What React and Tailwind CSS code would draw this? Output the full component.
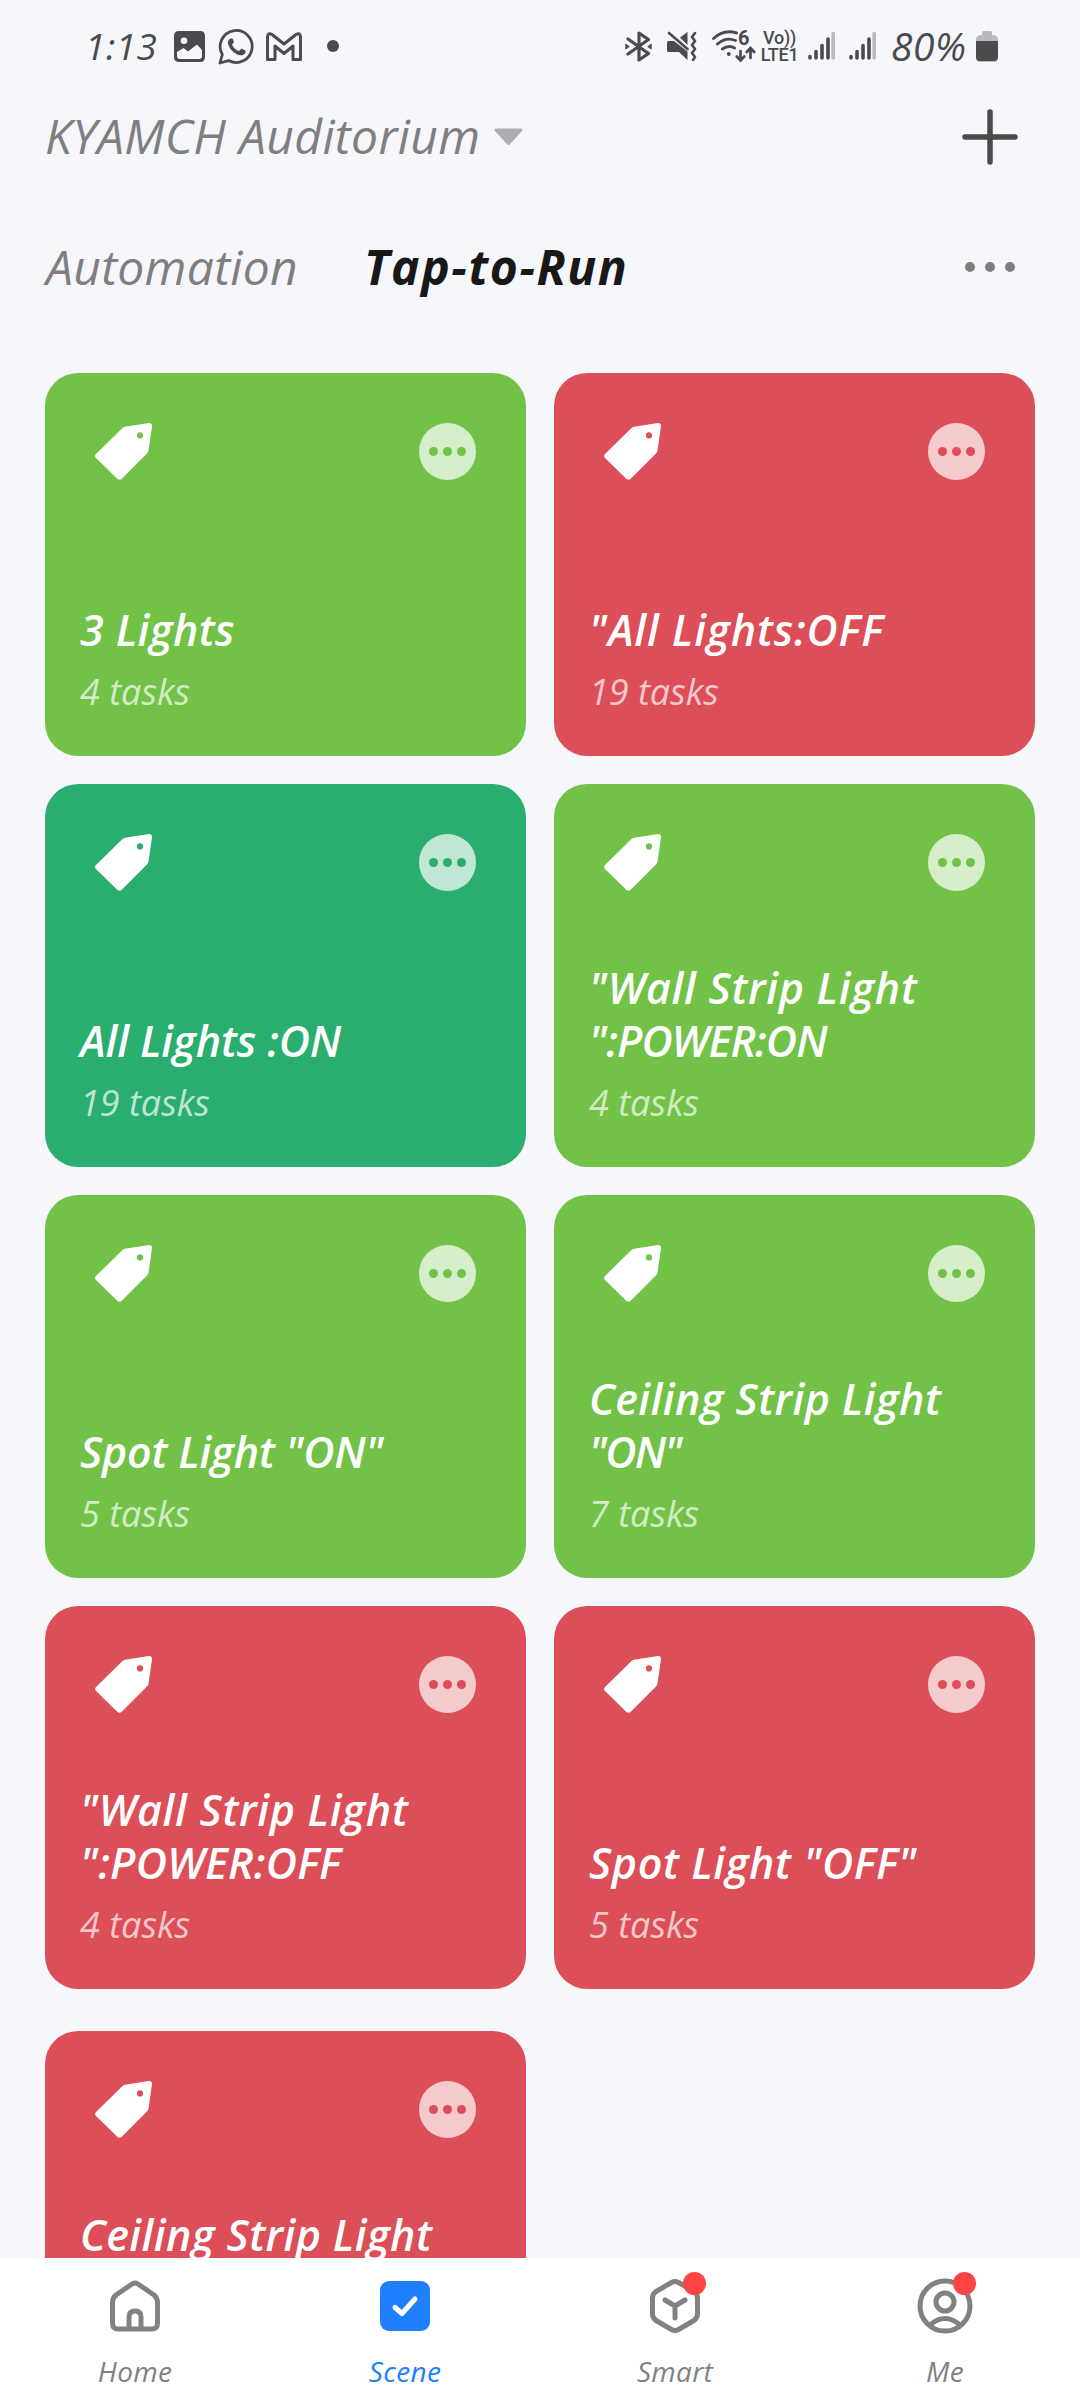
import React from 'react';

const scenes = [
    {
        title: [{ text: '3 Lights', tracking: 'tracking-[0.4px]' }],
        tasks: '4 tasks',
        color: 'lime'
    },
    {
        title: [{ text: '"All Lights:OFF', tracking: 'tracking-[0.9px]' }],
        tasks: '19 tasks',
        color: 'red'
    },
    {
        title: [{ text: 'All Lights :ON', tracking: 'tracking-[-0.1px]' }],
        tasks: '19 tasks',
        color: 'green'
    },
    {
        title: [
            { text: '"Wall Strip Light', tracking: 'tracking-[0.7px]' },
            { text: '":POWER:ON', tracking: 'tracking-[-0.8px]' }
        ],
        tasks: '4 tasks',
        color: 'lime'
    },
    {
        title: [{ text: 'Spot Light "ON"', tracking: 'tracking-[-0.2px]' }],
        tasks: '5 tasks',
        color: 'lime'
    },
    {
        title: [
            { text: 'Ceiling Strip Light', tracking: 'tracking-[0.4px]' },
            { text: '"ON"', tracking: 'tracking-[-1.7px]' }
        ],
        tasks: '7 tasks',
        color: 'lime'
    },
    {
        title: [
            { text: '"Wall Strip Light', tracking: 'tracking-[0.7px]' },
            { text: '":POWER:OFF', tracking: 'tracking-[0.3px]' }
        ],
        tasks: '4 tasks',
        color: 'red'
    },
    {
        title: [{ text: 'Spot Light "OFF"', tracking: 'tracking-[0.6px]' }],
        tasks: '5 tasks',
        color: 'red'
    }
];

// Only the first title line of this one shows above the bottom navigation
const lastScene = {
    title: [
        { text: 'Ceiling Strip Light', tracking: 'tracking-[0.4px]' },
        { text: '', tracking: '' }
    ],
    tasks: '',
    color: 'red'
};

const cardColors = {
    lime: { bg: 'bg-[#72c248]', dots: 'text-[#72c248]' },
    green: { bg: 'bg-[#2aae6f]', dots: 'text-[#2aae6f]' },
    red: { bg: 'bg-[#dc4e58]', dots: 'text-[#dc4e58]' }
};

const SignalBars = () => (
    <svg className="w-[27px] h-[30px]" viewBox="0 0 27 30" stroke="#4a4b4d" strokeWidth="3.6" strokeLinecap="round">
        <path d="M2 25.500V27M8 20.500V27M14 14.500V27M20 8V27" />
        <path d="M25.200 2.500V27" stroke="#b9babd" />
    </svg>
);

const StatusBar = () => (
    <div className="h-[92px] flex items-center justify-between pl-[85px] pr-[82px] text-[#4a4b4d]">
        <div className="flex items-center">
            <span className="w-[89px] text-[37px] tracking-[0.5px]">1:13</span>
            <svg className="w-[31px] h-[31px]" viewBox="0 0 31 31">
                <path fillRule="evenodd" fill="currentColor" d="M5 0H26Q31 0 31 5V26Q31 31 26 31H5Q0 31 0 26V5Q0 0 5 0ZM10 6.500A3.300 3.300 0 1 0 10 13.100A3.300 3.300 0 1 0 10 6.500ZM3 21V25Q3 28 6 28H25Q28 28 28 25V19L23 13.500L14 20.500L9.500 17Z" />
            </svg>
            <svg className="ml-[13px] w-[37px] h-[37px]" viewBox="0 0 37 37">
                <path fill="none" stroke="currentColor" strokeWidth="2.800" strokeLinejoin="round" d="M2 35L4.300 26.500A16 16 0 1 1 10.600 32.600Z" />
                <path fill="currentColor" d="M12.500 10.500Q10 11.500 9.800 14.500Q10.500 20 16 24.500Q21 28.200 24.800 27Q28 25.500 27.600 22.800L23.500 20.600L20.800 23.300Q16 21 14 16.500L16 14.200L14.500 10.500Z" />
            </svg>
            <svg className="ml-[11px] w-[36px] h-[29px]" viewBox="0 0 36 29" fill="none" stroke="currentColor" strokeWidth="3" strokeLinejoin="round">
                <path d="M1.500 5Q2 0 6 2.500L18 12L30 2.500Q34 0 34.500 5V27.500H27V14L18 21.500L9 14V27.500H1.500Z" />
            </svg>
            <span className="ml-[25px] w-[12px] h-[12px] rounded-full bg-current" />
        </div>
        <div className="flex items-center">
            <svg className="w-[27px] h-[31px]" viewBox="0 0 27 31" fill="none" stroke="currentColor" strokeWidth="3.200" strokeLinejoin="round" strokeLinecap="round">
                <path d="M3 8L23.500 22.500L14 29V2L23.500 8.500L3 23" />
                <path fill="currentColor" strokeWidth="1" d="M.8 13.500V18L4 15.800ZM26.200 13.500V18L23 15.800Z" />
            </svg>
            <svg className="ml-[15px] w-[30px] h-[30px]" viewBox="0 0 30 30" fill="currentColor">
                <path d="M1 10H7L20.500 20.500V29L12 21H1Q0 21 0 19V12Q0 10 1 10ZM13 6.500L20.500 1V14Z" />
                <path d="M2 2L20.500 18M28 2L25 6L28 10L25 14L28 18L25 22L28 26L26 29" fill="none" stroke="currentColor" strokeWidth="2.600" strokeLinecap="round" strokeLinejoin="round" />
            </svg>
            <div className="ml-[15px] relative w-[44px] h-[32px]">
                <svg className="w-full h-full" viewBox="0 0 44 32" fill="none" stroke="currentColor" strokeWidth="2.900" strokeLinecap="round">
                    <path d="M1.500 8.500Q12 -1 24.500 3M5.500 14Q14 6.500 23.500 10.500M10.500 19Q16.500 14.500 22.500 18" />
                    <circle cx="16.800" cy="24" r="1.900" fill="currentColor" stroke="none" />
                    <path strokeWidth="2.700" d="M28.500 21V30M24.800 26.500L28.500 30.500L32.200 26.500M38.500 28V19M34.800 22L38.500 18L42.200 22" />
                </svg>
                <span className="absolute left-[26px] -top-[4px] text-[20px] leading-[24px] font-bold not-italic font-[Roboto,sans-serif]">6</span>
            </div>
            <div className="ml-[4px] w-[39px] h-[34px] flex flex-col items-center not-italic font-medium font-[Roboto,sans-serif]">
                <span className="text-[18px] leading-[17px] tracking-[-0.3px] whitespace-nowrap">Vo))</span>
                <span className="text-[18px] leading-[17px] tracking-[-0.3px] whitespace-nowrap">LTE1</span>
            </div>
            <div className="ml-[9px] flex gap-[14px]">
                <SignalBars />
                <SignalBars />
            </div>
            <span className="ml-[15px] w-[85px] text-[39px] tracking-[0.5px]">80%</span>
            <svg className="w-[22px] h-[31px]" viewBox="0 0 22 31">
                <path fill="#b9babd" d="M7 0H15Q16 0 16 4H18Q22 5 22 9V27Q22 31 18 31H4Q0 31 0 27V9Q0 5 4 4H6Q6 0 7 0Z" />
                <path fill="currentColor" d="M0 10H22V26Q22 30 18 30H4Q0 30 0 26Z" />
            </svg>
        </div>
    </div>
);

const SceneCard = ({ scene }) => (
    <div className={`h-[383px] rounded-[33px] pl-[35px] pr-[50px] pt-[50px] pb-[42px] flex flex-col justify-between text-white ${cardColors[scene.color].bg}`}>
        <div className="flex items-center justify-between pl-[15px]">
            <svg className="w-[57px] h-[57px]" viewBox="0 0 57 57">
                <path
                    fill="currentColor"
                    fillRule="evenodd"
                    d="M30 3.800L54 0Q57.300 0 57 3.300L53.500 27.500Q53.400 29 52.200 30.200L26.500 56Q24.500 57.500 22.500 56L1 35Q-.8 33 1 31L27.500 4.900Q28.500 4 30 3.800ZM45 9.300A3.100 3.100 0 1 0 45 15.500A3.100 3.100 0 1 0 45 9.300Z"
                />
            </svg>
            <div className={`w-[57px] h-[57px] rounded-full bg-white/70 flex items-center justify-center gap-[5.600px] ${cardColors[scene.color].dots}`}>
                <span className="w-[8.500px] h-[8.500px] rounded-full bg-current" />
                <span className="w-[8.500px] h-[8.500px] rounded-full bg-current" />
                <span className="w-[8.500px] h-[8.500px] rounded-full bg-current" />
            </div>
        </div>
        <div>
            <h3 className="text-[43px] leading-[53px] font-semibold whitespace-nowrap">
                {scene.title.map((line, index) => (
                    <span key={index} className={`block h-[53px] ${line.tracking}`}>{line.text}</span>
                ))}
            </h3>
            <p className="mt-[14px] h-[44px] text-[36px] leading-[44px] text-white/70">{scene.tasks}</p>
        </div>
    </div>
);

const NavItem = ({ label, active, badge, children }) => (
    <div className={`w-[270px] pt-[20px] flex flex-col items-center ${active ? 'text-[#1f7fff]' : 'text-[#818181]'}`}>
        <div className="relative w-[58px] h-[58px]">
            <svg className="w-full h-full" viewBox="0 0 58 58" fill="none" stroke="currentColor" strokeWidth="5" strokeLinecap="round" strokeLinejoin="round">
                {children}
            </svg>
            {badge && <span className="absolute left-[37px] -top-[6px] w-[23px] h-[23px] rounded-full bg-[#ff4444]" />}
        </div>
        <span className="mt-[17px] text-[28px] leading-[36px] tracking-[0.3px]">{label}</span>
    </div>
);

const App = () => {
    return (
        <div className="w-[1080px] h-[2400px] overflow-hidden flex flex-col bg-[#f5f7fb] italic font-['Open_Sans',sans-serif]">
            <StatusBar />

            {/* Home picker */}
            <div className="h-[90px] flex items-center justify-between pl-[45px] pr-[62px]">
                <div className="flex items-center text-[#7f7f80]">
                    <span className="text-[48px] leading-[60px] w-[449px] pb-[2px] tracking-[0.35px] whitespace-nowrap">KYAMCH Auditorium</span>
                    <svg className="w-[29px] h-[18px]" viewBox="0 0 29 18">
                        <path d="M2 2H27L14.500 15.500Z" fill="#adadaf" stroke="#adadaf" strokeWidth="3" strokeLinejoin="round" />
                    </svg>
                </div>
                <svg className="w-[56px] h-[56px]" viewBox="0 0 56 56" stroke="#4a4a4b" strokeWidth="5.500" strokeLinecap="round">
                    <path d="M28 3V53M3 28H53" />
                </svg>
            </div>

            {/* Tabs */}
            <div className="h-[170px] flex items-center justify-between pl-[46px] pr-[65px]">
                <div className="flex items-center text-[48px] leading-[60px] whitespace-nowrap">
                    <span className="w-[318px] tracking-[0.3px] text-[#7f7f80]">Automation</span>
                    <span className="font-bold tracking-[1.6px] text-[#181818]">Tap-to-Run</span>
                </div>
                <div className="flex gap-[10px]">
                    <span className="w-[10px] h-[10px] rounded-full bg-[#7f7f80]" />
                    <span className="w-[10px] h-[10px] rounded-full bg-[#7f7f80]" />
                    <span className="w-[10px] h-[10px] rounded-full bg-[#7f7f80]" />
                </div>
            </div>

            {/* Scenes */}
            <div className="flex-1 min-h-0 overflow-hidden px-[45px] pt-[21px]">
                <div className="grid grid-cols-2 gap-[28px]">
                    {scenes.map((scene, index) => (
                        <SceneCard key={index} scene={scene} />
                    ))}
                </div>
                <div className="mt-[42px] grid grid-cols-2 gap-[28px]">
                    <SceneCard scene={lastScene} />
                </div>
            </div>

            {/* Bottom navigation */}
            <div className="h-[142px] shrink-0 bg-white flex">
                <NavItem label="Home">
                    <path d="M26 6Q29 4 32 6L48 17Q51.500 20 51.500 25V45Q51.500 51 46 51H12Q6.500 51 6.500 45V25Q6.500 20 10 17ZM23 51V39Q23 33 29 33Q35 33 35 39V51" />
                </NavItem>
                <NavItem label="Scene" active>
                    <rect x="4" y="3" width="50" height="50" rx="9" fill="currentColor" stroke="none" />
                    <path d="M19 29.500L26 35.500L39 21" stroke="#fff" />
                </NavItem>
                <NavItem label="Smart" badge>
                    <path d="M25.500 4.500Q29 2.500 32.500 4.500L48 13.500Q51.500 16 51.500 20V36Q51.500 40 48 42.500L32.500 51.500Q29 53.500 25.500 51.500L10 42.500Q6.500 40 6.500 36V20Q6.500 16 10 13.500ZM19 22L29 28L39 22M29 28V40" />
                </NavItem>
                <NavItem label="Me" badge>
                    <circle cx="29" cy="28" r="25" />
                    <circle cx="29" cy="24" r="9" />
                    <path d="M14 47Q29 34 44 47" />
                </NavItem>
            </div>
        </div>
    );
};

export default App;
